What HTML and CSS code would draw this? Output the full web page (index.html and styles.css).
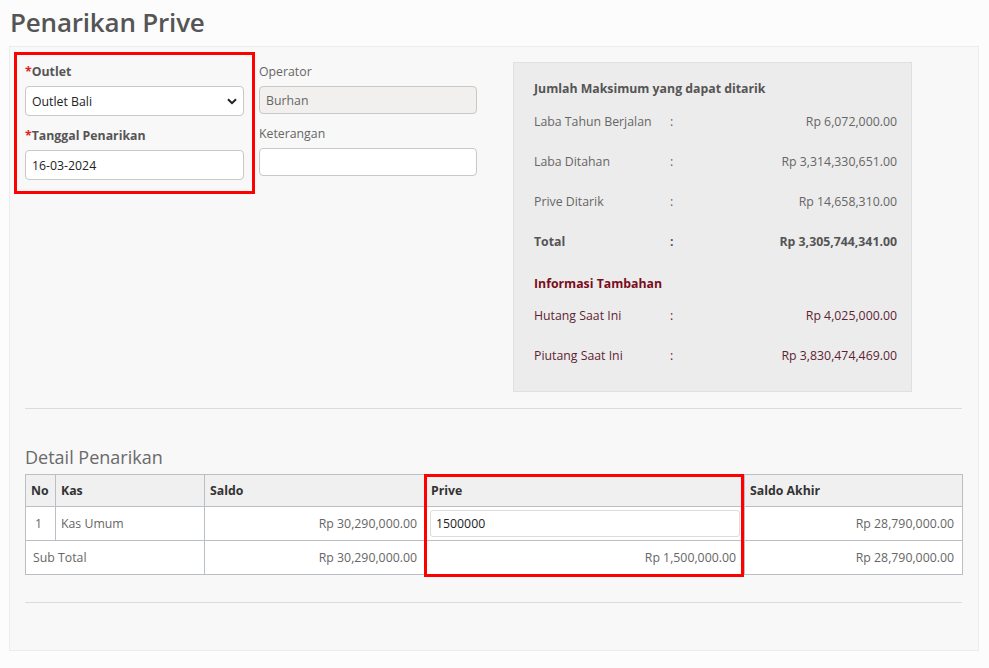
FILE: index.html
```html
<!DOCTYPE html>
<html lang="id">
<head>
<meta charset="utf-8">
<title>Penarikan Prive</title>
<link rel="stylesheet" href="styles.css">
</head>
<body>
<h1 class="page-title">Penarikan Prive</h1>

<div class="card">
  <div class="top-row">
    <div class="form-col highlight">
      <div class="field">
        <label class="label req"><span class="star">*</span>Outlet</label>
        <div class="select-wrap">
          <select class="control select">
            <option>Outlet Bali</option>
          </select>
          <svg class="chevron" width="10" height="7" viewBox="0 0 10 7"><path d="M1 1.2 L5 5.2 L9 1.2" fill="none" stroke="#222" stroke-width="2"/></svg>
        </div>
      </div>
      <div class="field">
        <label class="label req"><span class="star">*</span>Tanggal Penarikan</label>
        <input class="control" type="text" value="16-03-2024">
      </div>
    </div>

    <div class="form-col plain">
      <div class="field">
        <label class="label">Operator</label>
        <input class="control small readonly" type="text" value="Burhan" readonly>
      </div>
      <div class="field">
        <label class="label">Keterangan</label>
        <input class="control small" type="text" value="">
      </div>
    </div>

    <div class="info-box">
      <div class="info-head">Jumlah Maksimum yang dapat ditarik</div>
      <div class="info-row"><span>Laba Tahun Berjalan</span><span>:</span><span class="val">Rp 6,072,000.00</span></div>
      <div class="info-row"><span>Laba Ditahan</span><span>:</span><span class="val">Rp 3,314,330,651.00</span></div>
      <div class="info-row"><span>Prive Ditarik</span><span>:</span><span class="val">Rp 14,658,310.00</span></div>
      <div class="info-row total"><span>Total</span><span>:</span><span class="val">Rp 3,305,744,341.00</span></div>
      <div class="info-head extra">Informasi Tambahan</div>
      <div class="info-row extra"><span>Hutang Saat Ini</span><span>:</span><span class="val">Rp 4,025,000.00</span></div>
      <div class="info-row extra"><span>Piutang Saat Ini</span><span>:</span><span class="val">Rp 3,830,474,469.00</span></div>
    </div>
  </div>

  <hr class="divider first">

  <h2 class="section-title">Detail Penarikan</h2>
  <div class="table-wrap">
    <table class="detail">
      <colgroup>
        <col class="c-no"><col class="c-kas"><col class="c-saldo"><col class="c-prive"><col class="c-akhir">
      </colgroup>
      <thead>
        <tr><th>No</th><th>Kas</th><th>Saldo</th><th>Prive</th><th>Saldo Akhir</th></tr>
      </thead>
      <tbody>
        <tr>
          <td class="no">1</td>
          <td>Kas Umum</td>
          <td class="num">Rp 30,290,000.00</td>
          <td class="input-cell"><input class="cell-input" type="text" value="1500000"></td>
          <td class="num">Rp 28,790,000.00</td>
        </tr>
        <tr>
          <td colspan="2" class="sub">Sub Total</td>
          <td class="num">Rp 30,290,000.00</td>
          <td class="num">Rp 1,500,000.00</td>
          <td class="num">Rp 28,790,000.00</td>
        </tr>
      </tbody>
    </table>
    <div class="col-mark"></div>
  </div>

  <hr class="divider last">
</div>
</body>
</html>
```

FILE: styles.css
```css
* { box-sizing: border-box; }

html, body {
  margin: 0;
  background: #fcfcfc;
  font-family: "Open Sans", "Liberation Sans", sans-serif;
  font-size: 12.3px;
  color: #555;
}

.page-title {
  margin: 0;
  padding: 5px 0 0 10px;
  height: 46px;
  font-size: 26px;
  font-weight: 600;
  color: #555;
  line-height: 34px;
  letter-spacing: -0.2px;
}

.card {
  margin-left: 9px;
  width: 970px;
  height: 605px;
  background: #f8f8f8;
  border: 1px solid #ececec;
  padding: 5px 0 0 4px;
}

.top-row {
  display: flex;
  align-items: flex-start;
}

.form-col {
  display: flex;
  flex-direction: column;
  gap: 10px;
}

.highlight {
  width: 241px;
  height: 142px;
  border: 3px solid #f00;
  padding: 7px 8px 0 8px;
}

.plain {
  width: 218px;
  margin-left: 4px;
  padding-top: 10px;
}

.field {
  display: flex;
  flex-direction: column;
  gap: 4px;
}

.label {
  line-height: 20px;
  font-size: 12.3px;
  color: #666;
}

.label.req {
  font-weight: 700;
  color: #555;
}

.star { color: #e02020; }

.control {
  width: 100%;
  height: 30px;
  border: 1px solid #c8c8c8;
  border-radius: 4px;
  background: #fff;
  padding: 0 6px;
  font-family: inherit;
  font-size: 12.3px;
  color: #222;
  outline: none;
}

.control.small { height: 28px; }

.control.readonly {
  background: #f2f0ee;
  color: #666;
}

.select-wrap { position: relative; }

.select {
  appearance: none;
  -webkit-appearance: none;
}

.chevron {
  position: absolute;
  right: 7px;
  top: 12px;
  pointer-events: none;
}

.info-box {
  width: 399px;
  margin: 10px 0 0 36px;
  height: 330px;
  background: #ececec;
  border: 1px solid #e0e0e0;
  padding: 16px 14px 0 20px;
}

.info-head {
  font-weight: 700;
  color: #555;
  line-height: 20px;
  margin-bottom: 13px;
}

.info-head.extra {
  color: #7a0c20;
  margin-bottom: 12px;
}

.info-row {
  display: grid;
  grid-template-columns: 136px 20px 1fr;
  line-height: 20px;
  margin-bottom: 20px;
  color: #666;
}

.info-row .val { text-align: right; }

.info-row.total {
  font-weight: 700;
  color: #555;
  margin-bottom: 22px;
}

.info-row.extra { color: #5e1f33; }

.divider {
  border: 0;
  border-top: 1px solid #dcdcdc;
  margin: 0 0 0 11px;
  width: 937px;
}

.divider.first { margin-top: 16px; }

.section-title {
  margin: 35px 0 0 11px;
  font-size: 18px;
  font-weight: 400;
  color: #6a6a6a;
  line-height: 26px;
  height: 30px;
}

.table-wrap {
  position: relative;
  margin-left: 11px;
  width: 937px;
}

.detail {
  width: 937px;
  border-collapse: collapse;
  table-layout: fixed;
  background: #fff;
}

.c-no { width: 30px; }
.c-kas { width: 149px; }
.c-saldo { width: 221px; }
.c-prive { width: 319px; }
.c-akhir { width: 218px; }

.detail th,
.detail td {
  border: 1px solid #b9bfc5;
  padding: 0 8px 0 5px;
  text-align: left;
}

.detail th {
  height: 32px;
  background: #f0f0f0;
  color: #333;
  font-weight: 700;
}

.detail td {
  height: 34px;
  color: #666;
}

.detail td.no { padding-left: 9px; }
.detail td.sub { padding-left: 7px; }
.detail td.num { text-align: right; }

.detail td.input-cell { padding: 0 4px; }

.cell-input {
  display: block;
  width: 100%;
  height: 27px;
  border: 1px solid #dcdcdc;
  border-radius: 3px;
  padding: 0 5px;
  font-family: inherit;
  font-size: 12.3px;
  color: #222;
  background: #fff;
  outline: none;
}

/* red frame marking the Prive column */
.col-mark {
  position: absolute;
  left: 399px;
  top: 0;
  width: 320px;
  height: 103px;
  border: 3px solid #f00;
  pointer-events: none;
}

.divider.last { margin-top: 27px; }
```
